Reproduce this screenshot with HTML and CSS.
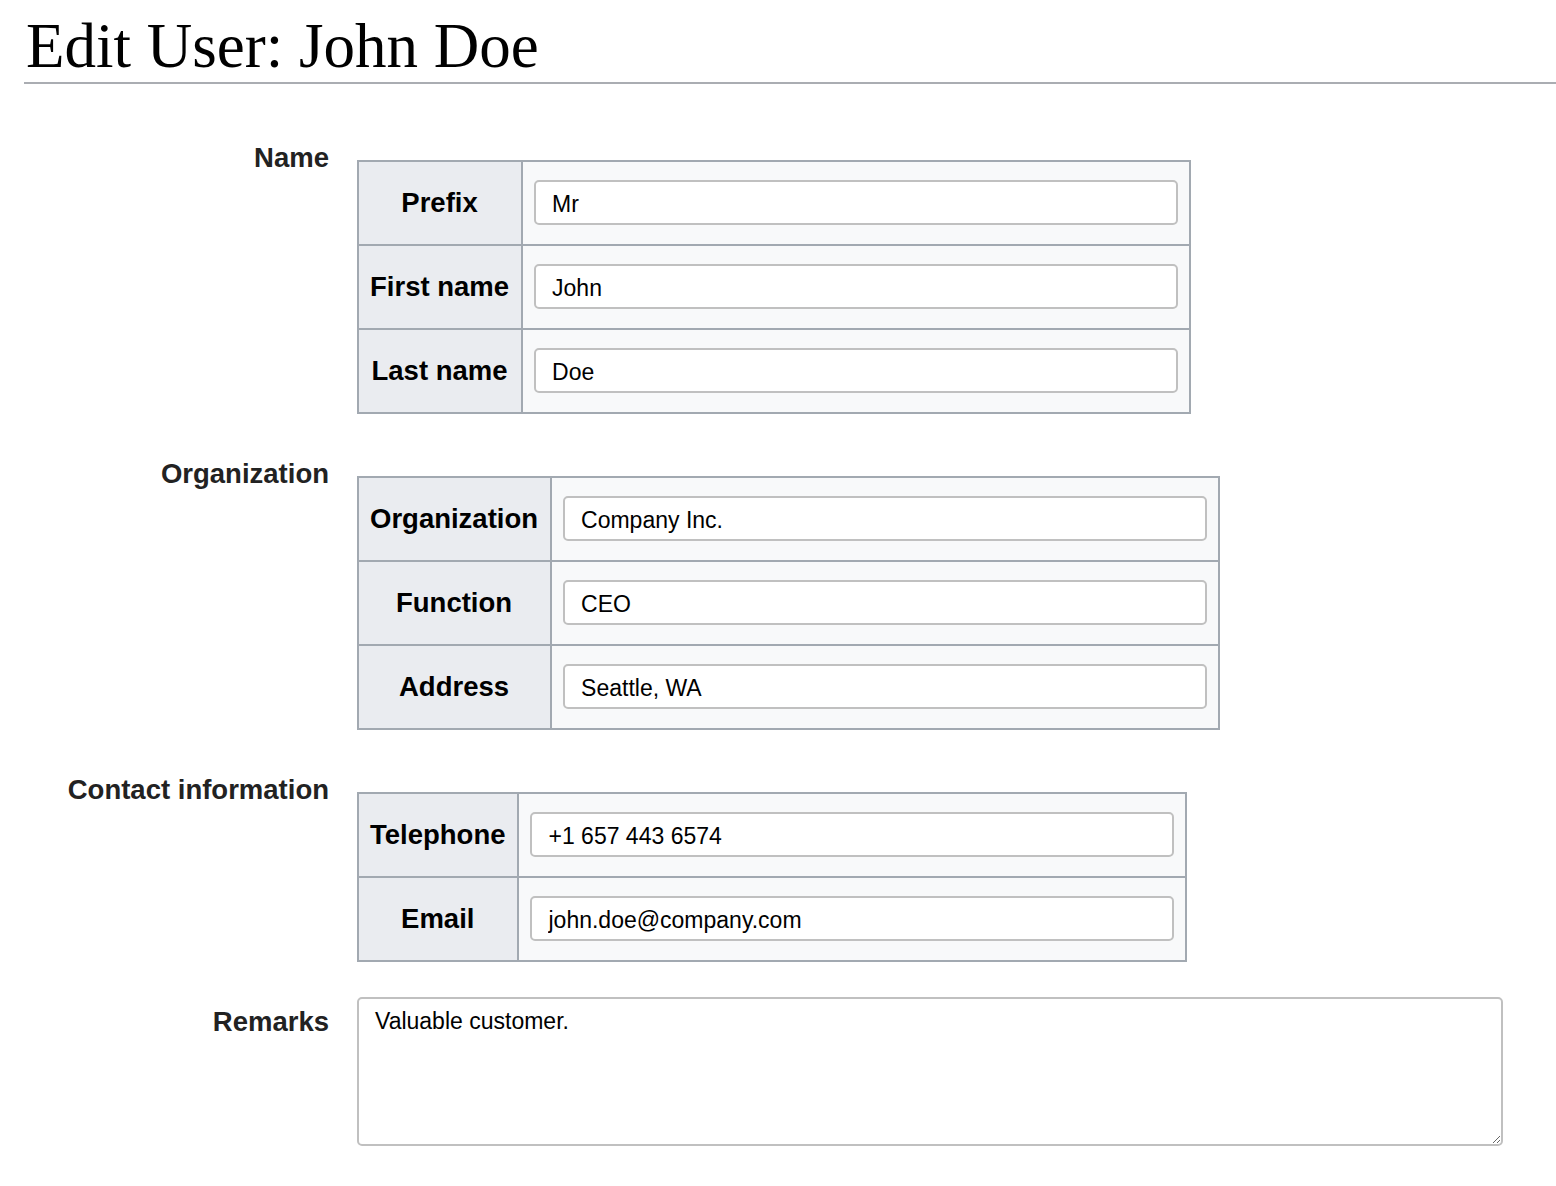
FILE: index.html
```html
<!DOCTYPE html>
<html lang="en">
<head>
<meta charset="utf-8">
<title>Edit User: John Doe</title>
<link rel="stylesheet" href="styles.css">
</head>
<body>
<h1 class="page-title">Edit User: John Doe</h1>
<form class="user-form">
  <div class="section">
    <div class="section-label">Name</div>
    <table class="field-table">
      <tr><th>Prefix</th><td><input class="text-input" type="text" value="Mr"></td></tr>
      <tr><th>First name</th><td><input class="text-input" type="text" value="John"></td></tr>
      <tr><th>Last name</th><td><input class="text-input" type="text" value="Doe"></td></tr>
    </table>
  </div>
  <div class="section">
    <div class="section-label">Organization</div>
    <table class="field-table">
      <tr><th>Organization</th><td><input class="text-input" type="text" value="Company Inc."></td></tr>
      <tr><th>Function</th><td><input class="text-input" type="text" value="CEO"></td></tr>
      <tr><th>Address</th><td><input class="text-input" type="text" value="Seattle, WA"></td></tr>
    </table>
  </div>
  <div class="section section-tight">
    <div class="section-label">Contact information</div>
    <table class="field-table">
      <tr><th>Telephone</th><td><input class="text-input" type="text" value="+1 657 443 6574"></td></tr>
      <tr><th>Email</th><td><input class="text-input" type="text" value="john.doe@company.com"></td></tr>
    </table>
  </div>
  <div class="section section-remarks">
    <div class="section-label">Remarks</div>
    <textarea class="remarks">Valuable customer.</textarea>
  </div>
</form>
</body>
</html>
```
FILE: styles.css
```css
html, body {
  margin: 0;
  padding: 0;
  background: #ffffff;
}

body {
  padding-left: 24px;
  font-family: "Liberation Sans", Arial, sans-serif;
  color: #202122;
}

.page-title {
  margin: 0;
  padding: 15px 0 4px 2px;
  font-family: "Liberation Serif", "Times New Roman", serif;
  font-weight: normal;
  font-size: 63px;
  line-height: 63px;
  color: #000;
  border-bottom: 2px solid #aaadb2;
}

.user-form {
  margin-top: 58px;
}

.section {
  display: grid;
  grid-template-columns: 305px auto;
  column-gap: 28px;
  justify-content: start;
  align-items: start;
  margin-bottom: 44px;
}

.section-tight {
  margin-bottom: 35px;
}

.section-label {
  font-weight: bold;
  font-size: 27.5px;
  line-height: 31px;
  text-align: right;
  color: #222222;
}

.section-remarks .section-label {
  padding-top: 9px;
}

.field-table {
  margin-top: 18px;
  border-collapse: collapse;
  border: 2px solid #a2a9b1;
  background: #f8f9fa;
}

.field-table th,
.field-table td {
  border: 2px solid #a2a9b1;
}

.field-table th {
  background: #eaecf0;
  padding: 0 12px 0 11px;
  font-size: 27.5px;
  font-weight: bold;
  color: #000;
  text-align: center;
  vertical-align: middle;
  white-space: nowrap;
}

.field-table td {
  padding: 18px 11px 19px 11px;
}

.text-input {
  display: block;
  box-sizing: border-box;
  width: 644px;
  height: 45px;
  margin: 0;
  padding: 3px 16px 0;
  border: 2px solid #c0c0c0;
  border-radius: 5px;
  background: #ffffff;
  font-family: "Liberation Sans", Arial, sans-serif;
  font-size: 23px;
  color: #000;
  outline: none;
}

.remarks {
  display: block;
  box-sizing: border-box;
  width: 1146px;
  height: 149px;
  margin: 0;
  padding: 9px 16px;
  border: 2px solid #c0c0c0;
  border-radius: 5px;
  background: #ffffff;
  font-family: "Liberation Sans", Arial, sans-serif;
  font-size: 23px;
  line-height: 26px;
  color: #000;
}
```
